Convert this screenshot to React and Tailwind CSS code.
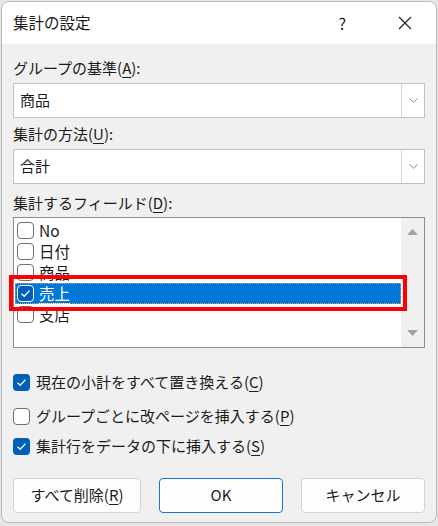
import React from 'react';

const font = { fontFamily: '"Noto Sans CJK JP", "Noto Sans", sans-serif' };

const Key = ({ k }) => <span className="underline underline-offset-[3px] decoration-1">{k}</span>;

const Check = ({ checked, className = '' }) =>
  checked ? (
    <span className={`flex items-center justify-center w-[17px] h-[17px] rounded-[4px] bg-[#005fb8] shrink-0 ${className}`}>
      <svg width="11" height="9" viewBox="0 0 11 9">
        <path d="M1.5 4.8 L4.2 7.3 L9.5 1.6" fill="none" stroke="white" strokeWidth="1.3" />
      </svg>
    </span>
  ) : (
    <span className={`block w-[17px] h-[17px] rounded-[4px] border border-[#6e6e6e] bg-white shrink-0 ${className}`} />
  );

const Combo = ({ value, className = '' }) => (
  <div className={`flex h-[35px] border border-[#c2c2c2] bg-white ${className}`}>
    <div className="flex-1 flex items-center pl-[6px] text-[15px]">{value}</div>
    <div className="w-[23px] border-l border-[#d6d6d6] flex items-center justify-center">
      <svg width="9" height="5" viewBox="0 0 9 5">
        <path d="M0.5 0.5 L4.5 4.3 L8.5 0.5" fill="none" stroke="#8a8a8a" strokeWidth="1" />
      </svg>
    </div>
  </div>
);

const fields = [
  { name: 'No', checked: false },
  { name: '日付', checked: false },
  { name: '商品', checked: false },
  { name: '売上', checked: true, selected: true },
  { name: '支店', checked: false },
];

const Option = ({ checked, label, k, className = '' }) => (
  <div className={`flex items-center h-[24px] ${className}`}>
    <Check checked={checked} />
    <span className="ml-[6px] text-[15px]">
      {label}(<Key k={k} />)
    </span>
  </div>
);

const Button = ({ children, primary, className = '' }) => (
  <button
    className={`h-[35px] rounded-[4px] bg-[#fdfdfd] text-[15px] flex items-center justify-center ${
      primary ? 'border border-[#1a73c8]' : 'border border-[#d3d3d3]'
    } ${className}`}
  >
    {children}
  </button>
);

export default function App() {
  return (
    <div className="w-[438px] h-[526px] bg-[#e6e6e6] pl-[1px] pt-[1px] text-[#1b1b1b]" style={font}>
      <div className="w-[436px] h-[522px] rounded-[8px] border border-[#b9b9b9] bg-[#f0f0f0] overflow-hidden flex flex-col relative">
        <div className="h-[42px] bg-white flex items-center shrink-0">
          <span className="ml-[11px] text-[15.5px]">集計の設定</span>
          <span className="ml-auto mr-[52px] text-[16px]">?</span>
          <svg className="mr-[24px]" width="14" height="14" viewBox="0 0 14 14">
            <path d="M1 1 L13 13 M13 1 L1 13" stroke="#222" strokeWidth="1.2" />
          </svg>
        </div>

        <div className="px-[11px] flex flex-col">
          <div className="mt-[13px] h-[22px] flex items-center text-[15px]">
            グループの基準(<Key k="A" />):
          </div>
          <Combo value="商品" className="mt-[4px]" />

          <div className="mt-[5px] h-[22px] flex items-center text-[15px]">
            集計の方法(<Key k="U" />):
          </div>
          <Combo value="合計" className="mt-[4px]" />

          <div className="mt-[8px] h-[22px] flex items-center text-[15px]">
            集計するフィールド(<Key k="D" />):
          </div>
          <div className="mt-[3px] h-[131px] border border-[#8c8c8c] bg-white flex">
            <div className="flex-1 pt-[2px] pl-[1px] overflow-hidden">
              {fields.map((f) => (
                <div
                  key={f.name}
                  className={`h-[21px] flex items-center pl-[2px] ${
                    f.selected ? 'bg-[#0078d7] text-white outline-1 outline-dotted outline-[#d9a070] -outline-offset-1' : ''
                  }`}
                >
                  <Check checked={f.checked} className={f.selected ? 'border border-white' : ''} />
                  <span className={`ml-[5px] text-[15.5px] ${f.selected ? 'underline underline-offset-[3px] decoration-1' : ''}`}>
                    {f.name}
                  </span>
                </div>
              ))}
            </div>
            <div className="w-[23px] bg-[#f0f0f0] flex flex-col items-center justify-between py-[11px]">
              <svg width="11" height="6" viewBox="0 0 11 6">
                <path d="M5.5 0 L11 6 L0 6 Z" fill="#a3a3a3" />
              </svg>
              <svg width="11" height="6" viewBox="0 0 11 6">
                <path d="M0 0 L11 0 L5.5 6 Z" fill="#a3a3a3" />
              </svg>
            </div>
          </div>

          <Option className="mt-[22px]" checked label="現在の小計をすべて置き換える" k="C" />
          <Option className="mt-[10px]" label="グループごとに改ページを挿入する" k="P" />
          <Option className="mt-[6px]" checked label="集計行をデータの下に挿入する" k="S" />

          <div className="mt-[20px] flex gap-[18px]">
            <Button className="w-[129px]">
              すべて削除(<Key k="R" />)
            </Button>
            <Button primary className="w-[125px]">OK</Button>
            <Button className="w-[125px]">キャンセル</Button>
          </div>
        </div>

        <div className="absolute left-[7px] top-[273px] w-[398px] h-[36px] border-[4px] border-[#ff0000] pointer-events-none" />
      </div>
    </div>
  );
}
